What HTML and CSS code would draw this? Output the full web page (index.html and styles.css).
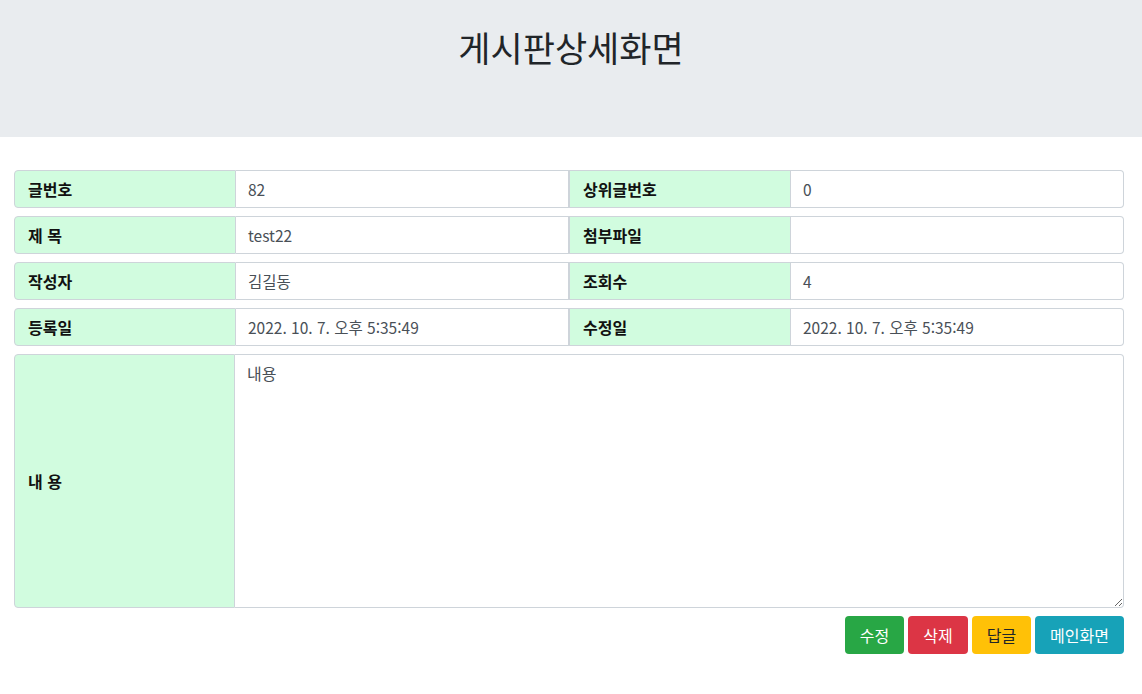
FILE: index.html
```html
<!DOCTYPE html>
<html lang="ko">
<head>
<meta charset="utf-8">
<title>게시판상세화면</title>
<link rel="stylesheet" href="styles.css">
</head>
<body>
<div class="jumbotron">
  <h1 class="title">게시판상세화면</h1>
</div>
<div class="container">
  <div class="row">
    <div class="group">
      <div class="label">글번호</div>
      <div class="value">82</div>
    </div>
    <div class="group">
      <div class="label">상위글번호</div>
      <div class="value">0</div>
    </div>
  </div>
  <div class="row">
    <div class="group">
      <div class="label">제 목</div>
      <div class="value">test22</div>
    </div>
    <div class="group">
      <div class="label">첨부파일</div>
      <div class="value"></div>
    </div>
  </div>
  <div class="row">
    <div class="group">
      <div class="label">작성자</div>
      <div class="value">김길동</div>
    </div>
    <div class="group">
      <div class="label">조회수</div>
      <div class="value">4</div>
    </div>
  </div>
  <div class="row">
    <div class="group">
      <div class="label">등록일</div>
      <div class="value">2022. 10. 7. 오후 5:35:49</div>
    </div>
    <div class="group">
      <div class="label">수정일</div>
      <div class="value">2022. 10. 7. 오후 5:35:49</div>
    </div>
  </div>
  <div class="row">
    <div class="group full">
      <div class="label">내 용</div>
      <textarea class="content" readonly>내용</textarea>
    </div>
  </div>
  <div class="actions">
    <button class="btn green">수정</button>
    <button class="btn red">삭제</button>
    <button class="btn yellow">답글</button>
    <button class="btn teal">메인화면</button>
  </div>
</div>
</body>
</html>
```
FILE: styles.css
```css
* { box-sizing: border-box; }
body {
  margin: 0;
  font-family: "Noto Sans CJK KR", "Noto Sans", sans-serif;
  font-size: 16px;
  color: #212529;
  background: #fff;
}
.jumbotron {
  background: #e9ecef;
  padding: 26px 0 0;
  height: 137px;
}
.title {
  margin: 0;
  text-align: center;
  font-size: 35px;
  font-weight: 400;
  line-height: 1.2;
  color: #212529;
}
.container {
  width: 1110px;
  margin: 33px 0 0 14px;
}
.row {
  display: flex;
  margin-bottom: 8px;
}
.group {
  flex: 1 1 50%;
  display: flex;
  height: 38px;
}
.label {
  flex: 0 0 40%;
  background: #d1fcdf;
  border: 1px solid #ced4da;
  border-radius: 4px 0 0 4px;
  padding: 0 13px;
  display: flex;
  align-items: center;
  font-weight: 700;
  color: #111;
  font-size: 16px;
}
.value {
  flex: 1;
  border: 1px solid #ced4da;
  border-left: 0;
  border-radius: 0 4px 4px 0;
  padding: 0 12px;
  display: flex;
  align-items: center;
  color: #495057;
  font-size: 15.5px;
}
.group:first-child .value { border-radius: 0; }
.group + .group .label { border-radius: 0; }
.group.full {
  height: 254px;
}
.group.full .label {
  flex: 0 0 221px;
  border-radius: 4px 0 0 4px;
}
.content {
  flex: 1;
  border: 1px solid #ced4da;
  border-left: 0;
  border-radius: 0 4px 4px 0;
  padding: 6px 12px;
  font-family: inherit;
  font-size: 16px;
  line-height: 1.5;
  color: #495057;
  resize: both;
  outline: none;
}
.actions {
  display: flex;
  justify-content: flex-end;
  gap: 4px;
  margin-top: 8px;
}
.btn {
  height: 38px;
  border: 1px solid transparent;
  border-radius: 4px;
  padding: 0 14px;
  font-family: inherit;
  font-size: 16px;
  color: #fff;
  cursor: pointer;
}
.green { background: #28a745; }
.red { background: #dc3545; }
.yellow { background: #ffc107; color: #212529; }
.teal { background: #17a2b8; }
```
